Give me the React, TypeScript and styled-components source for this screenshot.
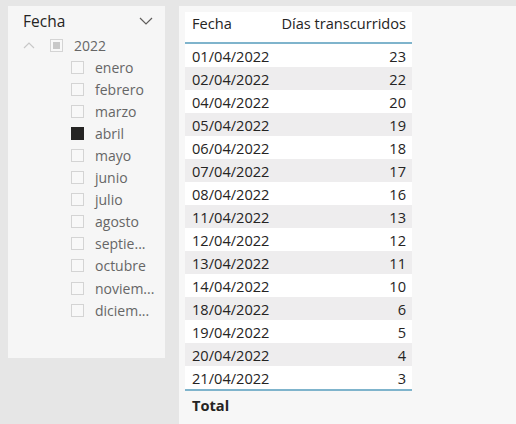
import React, { FC } from 'react';
import styled, { createGlobalStyle } from 'styled-components';

const GlobalStyle = createGlobalStyle`
  html, body {
    margin: 0;
    padding: 0;
    background: #e6e6e6;
  }
  body {
    font-family: 'Open Sans', 'Noto Sans', sans-serif;
  }
`;

const Page = styled.div`
  display: flex;
  align-items: flex-start;
  gap: 14px;
  padding: 6px 0 0 8px;
  width: 516px;
  height: 424px;
  box-sizing: border-box;
  overflow: hidden;
`;

const Slicer = styled.div`
  width: 157px;
  height: 352px;
  background: #f6f6f6;
  box-sizing: border-box;
  padding: 2px 0 0 15px;
`;

const SlicerHeader = styled.div`
  display: flex;
  justify-content: space-between;
  align-items: center;
  height: 26px;
  padding-right: 12px;
`;

const SlicerTitle = styled.span`
  font-size: 15.5px;
  color: #252423;
`;

const TreeRow = styled.div<{ $indent?: number }>`
  display: flex;
  align-items: center;
  height: 22.1px;
  padding-left: ${p => p.$indent ?? 0}px;
  font-size: 14px;
  color: #666666;
  white-space: nowrap;
`;

const Box = styled.span<{ $checked?: boolean }>`
  width: 13px;
  height: 13px;
  box-sizing: border-box;
  border: 1px solid ${p => (p.$checked ? '#252423' : '#d4d4d4')};
  background: ${p => (p.$checked ? '#252423' : '#f8f8f8')};
  margin-right: 11px;
  display: flex;
  align-items: center;
  justify-content: center;
`;

const Partial = styled.span`
  width: 7px;
  height: 7px;
  background: #c8c8c8;
`;

const Caret = styled.svg`
  width: 12px;
  height: 8px;
  margin-right: 15px;
`;

const Canvas = styled.div`
  flex: 1;
  height: 418px;
  background: #f7f7f7;
  padding: 6px 0 0 6px;
  box-sizing: border-box;
`;

const Table = styled.div`
  width: 227px;
  display: flex;
  flex-direction: column;
`;

const Row = styled.div<{ $shade?: boolean }>`
  display: flex;
  justify-content: space-between;
  align-items: center;
  height: 23px;
  padding: 1px 6px 0 7px;
  box-sizing: border-box;
  background: ${p => (p.$shade ? '#eeedee' : '#ffffff')};
  font-size: 14.6px;
  color: #252423;
`;

const HeaderRow = styled(Row)`
  height: 32px;
  padding-top: 0;
  padding-bottom: 8px;
  border-bottom: 2px solid #7fb4cc;
`;

const TotalRow = styled(Row)`
  border-top: 2px solid #7fb4cc;
  background: transparent;
  height: 28px;
  font-weight: 700;
`;

const months = [
  'enero', 'febrero', 'marzo', 'abril', 'mayo', 'junio',
  'julio', 'agosto', 'septie...', 'octubre', 'noviem...', 'diciem...'
];

const rows: [string, number][] = [
  ['01/04/2022', 23], ['02/04/2022', 22], ['04/04/2022', 20], ['05/04/2022', 19],
  ['06/04/2022', 18], ['07/04/2022', 17], ['08/04/2022', 16], ['11/04/2022', 13],
  ['12/04/2022', 12], ['13/04/2022', 11], ['14/04/2022', 10], ['18/04/2022', 6],
  ['19/04/2022', 5], ['20/04/2022', 4], ['21/04/2022', 3]
];

const App: FC = () => (
  <>
    <GlobalStyle />
    <Page>
      <Slicer>
        <SlicerHeader>
          <SlicerTitle>Fecha</SlicerTitle>
          <svg width="14" height="8" viewBox="0 0 14 8">
            <path d="M1 1 L7 7 L13 1" fill="none" stroke="#605e5c" strokeWidth="1.2" />
          </svg>
        </SlicerHeader>
        <TreeRow>
          <Caret viewBox="0 0 12 8">
            <path d="M1 7 L6 2 L11 7" fill="none" stroke="#c8c8c8" strokeWidth="1.2" />
          </Caret>
          <Box><Partial /></Box>
          2022
        </TreeRow>
        {months.map(m => (
          <TreeRow key={m} $indent={48}>
            <Box $checked={m === 'abril'} />
            {m}
          </TreeRow>
        ))}
      </Slicer>
      <Canvas>
        <Table>
          <HeaderRow>
            <span>Fecha</span>
            <span>Días transcurridos</span>
          </HeaderRow>
          {rows.map(([d, n], i) => (
            <Row key={d} $shade={i % 2 === 1}>
              <span>{d}</span>
              <span>{n}</span>
            </Row>
          ))}
          <TotalRow>
            <span>Total</span>
          </TotalRow>
        </Table>
      </Canvas>
    </Page>
  </>
);

export default App;
